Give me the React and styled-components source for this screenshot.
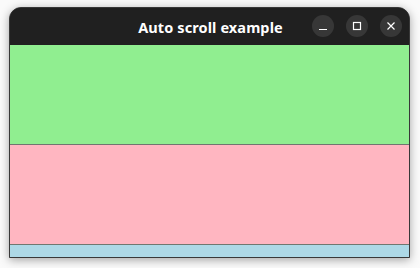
import styled, { createGlobalStyle } from "styled-components";

const GlobalStyle = createGlobalStyle`
  html, body {
    margin: 0;
    padding: 0;
    background: #fafafa;
    overflow: hidden;
  }
`;

const Desktop = styled.div`
  width: 420px;
  height: 268px;
  padding: 7px 10px 0 9px;
  box-sizing: border-box;
`;

const Window = styled.div`
  width: 401px;
  height: 251px;
  display: flex;
  flex-direction: column;
  border-radius: 12px 12px 0 0;
  background: #202020;
  border: 1px solid #383838;
  box-sizing: border-box;
  overflow: hidden;
  box-shadow: 0 2px 10px rgba(0, 0, 0, 0.35);
`;

const TitleBar = styled.div`
  height: 37px;
  flex: none;
  position: relative;
  display: flex;
  align-items: center;
  justify-content: center;
  background: #202020;
`;

const Title = styled.div`
  font-family: "Noto Sans", "Open Sans", sans-serif;
  font-weight: 700;
  font-size: 14.5px;
  color: #ffffff;
  letter-spacing: 0.1px;
  margin-left: 2px;
`;

const Controls = styled.div`
  position: absolute;
  right: 7px;
  top: 7px;
  display: flex;
  gap: 12px;
`;

const ControlButton = styled.div`
  width: 22px;
  height: 22px;
  border-radius: 50%;
  background: #373737;
  display: flex;
  align-items: center;
  justify-content: center;
`;

const Content = styled.div`
  flex: 1;
  overflow: hidden;
  display: flex;
  flex-direction: column;
  background: #e8e8e8;
`;

const Box = styled.div`
  flex: none;
  height: 99px;
  background: ${(p) => p.$color};
  border-bottom: 1px solid #707770;
`;

const App = () => {
  return (
    <>
      <GlobalStyle />
      <Desktop>
        <Window>
          <TitleBar>
            <Title>Auto scroll example</Title>
            <Controls>
              <ControlButton>
                <svg width="10" height="10" viewBox="0 0 10 10">
                  <path d="M1 8.5h8" stroke="#fff" strokeWidth="1.2" />
                </svg>
              </ControlButton>
              <ControlButton>
                <svg width="10" height="10" viewBox="0 0 10 10">
                  <rect x="1.5" y="1.5" width="7" height="7" fill="none" stroke="#fff" strokeWidth="1.2" />
                </svg>
              </ControlButton>
              <ControlButton>
                <svg width="10" height="10" viewBox="0 0 10 10">
                  <path d="M1.5 1.5l7 7M8.5 1.5l-7 7" stroke="#fff" strokeWidth="1.2" />
                </svg>
              </ControlButton>
            </Controls>
          </TitleBar>
          <Content>
            <Box $color="#90ee90" />
            <Box $color="#ffb6c1" />
            <Box $color="#add8e6" />
          </Content>
        </Window>
      </Desktop>
    </>
  );
};

export default App;
